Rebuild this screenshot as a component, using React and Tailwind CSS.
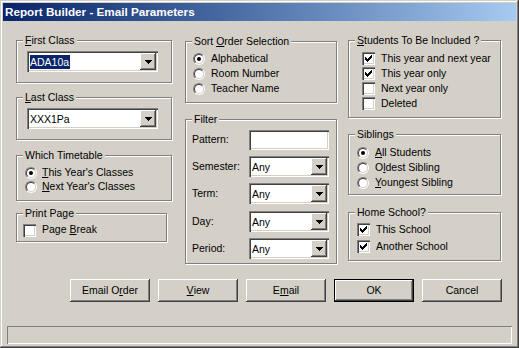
import React from "react";

const FONT = { fontFamily: '"Liberation Sans", Arial, sans-serif' };

function Group({ label, className = "", children }) {
  return (
    <div
      className={`flex flex-col border border-[#808080] shadow-[inset_1px_1px_0_#fff,1px_1px_0_#fff] ${className}`}
    >
      <div className="-mt-[7px] ml-[6px] h-[13px] self-start bg-[#d4d0c8] px-[2px] leading-[13px]">
        {label}
      </div>
      {children}
    </div>
  );
}

function Arrow() {
  return (
    <svg width="7" height="4" viewBox="0 0 7 4" shapeRendering="crispEdges">
      <rect x="0" y="0" width="7" height="1" fill="#000" />
      <rect x="1" y="1" width="5" height="1" fill="#000" />
      <rect x="2" y="2" width="3" height="1" fill="#000" />
      <rect x="3" y="3" width="1" height="1" fill="#000" />
    </svg>
  );
}

function Combo({ value, selected, className = "" }) {
  return (
    <div
      className={`flex h-[21px] bg-white p-[2px] shadow-[inset_1px_1px_0_#808080,inset_2px_2px_0_#404040,inset_-1px_-1px_0_#fff,inset_-2px_-2px_0_#d4d0c8] ${className}`}
    >
      <div className="flex flex-1 items-center pl-[1px]">
        <span
          className={
            selected
              ? "bg-[#0a246a] pr-[1px] leading-[14px] text-white"
              : "leading-[14px]"
          }
        >
          {value}
        </span>
      </div>
      <div className="flex h-[17px] w-[16px] items-center justify-center bg-[#d4d0c8] shadow-[inset_-1px_-1px_0_#404040,inset_1px_1px_0_#fff,inset_-2px_-2px_0_#808080]">
        <Arrow />
      </div>
    </div>
  );
}

function Radio({ checked }) {
  return (
    <div className="h-[12px] w-[12px] shrink-0 rounded-full border border-b-white border-l-[#808080] border-r-white border-t-[#808080]">
      <div className="flex h-full w-full items-center justify-center rounded-full border border-b-[#d4d0c8] border-l-[#404040] border-r-[#d4d0c8] border-t-[#404040] bg-white">
        {checked && <div className="h-[4px] w-[4px] rounded-full bg-black" />}
      </div>
    </div>
  );
}

function Check({ checked }) {
  return (
    <div className="h-[13px] w-[13px] shrink-0 bg-white shadow-[inset_1px_1px_0_#808080,inset_2px_2px_0_#404040,inset_-1px_-1px_0_#fff,inset_-2px_-2px_0_#d4d0c8]">
      {checked && (
        <svg width="13" height="13" viewBox="0 0 13 13" shapeRendering="crispEdges">
          <rect x="3" y="5" width="1" height="3" fill="#000" />
          <rect x="4" y="6" width="1" height="3" fill="#000" />
          <rect x="5" y="7" width="1" height="3" fill="#000" />
          <rect x="6" y="6" width="1" height="3" fill="#000" />
          <rect x="7" y="5" width="1" height="3" fill="#000" />
          <rect x="8" y="4" width="1" height="3" fill="#000" />
          <rect x="9" y="3" width="1" height="3" fill="#000" />
        </svg>
      )}
    </div>
  );
}

function RadioRow({ checked, children, h = "h-[15px]", gap = "gap-[6px]" }) {
  return (
    <div className={`flex items-center ${h} ${gap}`}>
      <Radio checked={checked} />
      <span className="whitespace-nowrap">{children}</span>
    </div>
  );
}

function CheckRow({ checked, children, h = "h-[15px]" }) {
  return (
    <div className={`flex items-center gap-[6px] ${h}`}>
      <Check checked={checked} />
      <span className="whitespace-nowrap">{children}</span>
    </div>
  );
}

function Button({ children, isDefault }) {
  return (
    <div
      className={`flex h-[23px] w-[80px] items-center justify-center bg-[#d4d0c8] shadow-[inset_-1px_-1px_0_#404040,inset_1px_1px_0_#fff,inset_-2px_-2px_0_#808080] ${
        isDefault ? "border border-black" : ""
      }`}
    >
      {children}
    </div>
  );
}

function FilterRow({ label, children, className = "" }) {
  return (
    <div className={`flex items-center ${className}`}>
      <span className="w-[57px] whitespace-nowrap">{label}</span>
      {children}
    </div>
  );
}

export default function App() {
  return (
    <div
      style={FONT}
      className="flex h-[348px] w-[519px] flex-col bg-[#d4d0c8] p-[3px] text-[10.5px] text-black shadow-[inset_-1px_-1px_0_#404040,inset_1px_1px_0_#d4d0c8,inset_-2px_-2px_0_#808080,inset_2px_2px_0_#fff]"
    >
      {/* Title bar */}
      <div className="flex h-[18px] items-center bg-linear-to-r from-[#0a246a] to-[#a6caf0] pl-[2px]">
        <span className="text-[11.7px] font-bold leading-none text-white">
          Report Builder - Email Parameters
        </span>
      </div>

      {/* Content */}
      <div className="flex h-[258px] items-start pl-[13px]">
        {/* Left column */}
        <div className="mr-[13px] flex w-[156px] flex-col">
          <Group label={<><u>F</u>irst Class</>} className="mt-[19px] h-[43px]">
            <Combo value="ADA10a" selected className="ml-[10px] mt-[4px] w-[131px]" />
          </Group>
          <Group label={<><u>L</u>ast Class</>} className="mt-[14px] h-[43px]">
            <Combo value="XXX1Pa" className="ml-[10px] mt-[4px] w-[131px]" />
          </Group>
          <Group label="Which Timetable" className="mt-[15px] h-[46px]">
            <div className="ml-[8px] mt-[4px] flex flex-col">
              <RadioRow checked h="h-[14px]" gap="gap-[5px]">
                <u>T</u>his Year's Classes
              </RadioRow>
              <RadioRow h="h-[14px]" gap="gap-[5px]">
                <u>N</u>ext Year's Classes
              </RadioRow>
            </div>
          </Group>
          <Group label="Print Page" className="mt-[12px] h-[29px] w-[151px]">
            <div className="ml-[6px] mt-[3px]">
              <CheckRow h="h-[14px]">
                Page <u>B</u>reak
              </CheckRow>
            </div>
          </Group>
        </div>

        {/* Middle column */}
        <div className="mr-[11px] flex w-[152px] flex-col">
          <Group label={<>Sort <u>O</u>rder Selection</>} className="mt-[20px] h-[62px]">
            <div className="ml-[7px] mt-[3px] flex flex-col">
              <RadioRow checked>Alphabetical</RadioRow>
              <RadioRow>Room Number</RadioRow>
              <RadioRow>Teacher Name</RadioRow>
            </div>
          </Group>
          <Group label="Filter" className="mt-[16px] h-[145px]">
            <div className="ml-[6px] mt-[4px] flex flex-col">
              <FilterRow label="Pattern:">
                <div className="h-[20px] w-[80px] bg-white shadow-[inset_1px_1px_0_#808080,inset_2px_2px_0_#404040,inset_-1px_-1px_0_#fff,inset_-2px_-2px_0_#d4d0c8]" />
              </FilterRow>
              <FilterRow label="Semester:" className="mt-[6px]">
                <Combo value="Any" className="w-[80px]" />
              </FilterRow>
              <FilterRow label="Term:" className="mt-[6px]">
                <Combo value="Any" className="w-[80px]" />
              </FilterRow>
              <FilterRow label="Day:" className="mt-[7px]">
                <Combo value="Any" className="w-[80px]" />
              </FilterRow>
              <FilterRow label="Period:" className="mt-[6px]">
                <Combo value="Any" className="w-[80px]" />
              </FilterRow>
            </div>
          </Group>
        </div>

        {/* Right column */}
        <div className="flex w-[153px] flex-col">
          <Group label={<><u>S</u>tudents To Be Included ?</>} className="mt-[19px] h-[78px]">
            <div className="ml-[13px] mt-[4px] flex flex-col">
              <CheckRow checked>This year and next year</CheckRow>
              <CheckRow checked>This year only</CheckRow>
              <CheckRow>Next year only</CheckRow>
              <CheckRow>Deleted</CheckRow>
            </div>
          </Group>
          <Group label="Siblings" className="mt-[16px] h-[61px]">
            <div className="ml-[8px] mt-[4px] flex flex-col">
              <RadioRow checked>
                <u>A</u>ll Students
              </RadioRow>
              <RadioRow>
                O<u>l</u>dest Sibling
              </RadioRow>
              <RadioRow>
                <u>Y</u>oungest Sibling
              </RadioRow>
            </div>
          </Group>
          <Group label="Home School?" className="mt-[17px] h-[49px]">
            <div className="ml-[8px] mt-[2px] flex flex-col">
              <CheckRow checked h="h-[17px]">This School</CheckRow>
              <CheckRow checked h="h-[17px]">Another School</CheckRow>
            </div>
          </Group>
        </div>
      </div>

      {/* Buttons */}
      <div className="ml-[67px] flex gap-[8px]">
        <Button>
          Email O<u>r</u>der
        </Button>
        <Button>
          <u>V</u>iew
        </Button>
        <Button>
          E<u>m</u>ail
        </Button>
        <Button isDefault>OK</Button>
        <Button>Cancel</Button>
      </div>

      {/* Status bar */}
      <div className="ml-[4px] mt-[24px] h-[18px] w-[505px] shadow-[inset_1px_1px_0_#808080,inset_-1px_-1px_0_#fff]" />
    </div>
  );
}
